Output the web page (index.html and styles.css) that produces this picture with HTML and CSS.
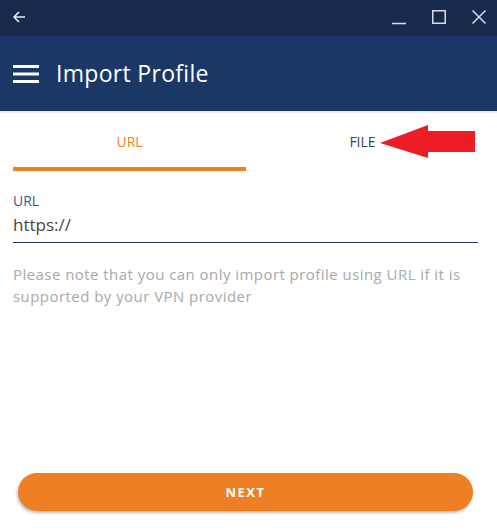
FILE: index.html
```html
<!DOCTYPE html>
<html>
<head>
<meta charset="utf-8">
<link rel="stylesheet" href="styles.css">
</head>
<body>
<div class="app">
  <div class="titlebar">
    <svg class="back" width="16" height="16" viewBox="0 0 16 16"><path d="M14 8H3M8 3L3 8L8 13" fill="none" stroke="#e8ecf2" stroke-width="1.6"/></svg>
    <div class="winctl">
      <svg width="16" height="16" viewBox="0 0 16 16"><path d="M1 14.5H15" stroke="#d8dde6" stroke-width="1.5"/></svg>
      <svg width="16" height="16" viewBox="0 0 16 16"><rect x="1.75" y="1.75" width="12.5" height="12.5" fill="none" stroke="#d8dde6" stroke-width="1.5"/></svg>
      <svg width="16" height="16" viewBox="0 0 16 16"><path d="M1.5 1.5L14.5 14.5M14.5 1.5L1.5 14.5" stroke="#d8dde6" stroke-width="1.5"/></svg>
    </div>
  </div>
  <div class="header">
    <svg class="menu" width="26" height="18" viewBox="0 0 26 18"><path d="M0 1.5H26M0 9H26M0 16.5H26" stroke="#fff" stroke-width="3"/></svg>
    <h1 class="title">Import Profile</h1>
  </div>
  <div class="tabs">
    <div class="tab active">URL</div>
    <div class="tab">FILE</div>
    <svg class="callout" width="96" height="36" viewBox="0 0 96 36"><path d="M0 18L48 0V6H95V27H48V33Z" fill="#ee1c25"/></svg>
  </div>
  <div class="form">
    <label class="label">URL</label>
    <div class="input">https://</div>
    <p class="note">Please note that you can only import profile using URL if it is supported by your VPN provider</p>
  </div>
  <div class="footer">
    <button class="next">NEXT</button>
  </div>
</div>
</body>
</html>
```
FILE: styles.css
```css
html, body {
  margin: 0;
  padding: 0;
  background: #fff;
}
.app {
  width: 497px;
  height: 532px;
  display: flex;
  flex-direction: column;
  font-family: "Open Sans", "Lato", sans-serif;
}
.titlebar {
  height: 36px;
  background: #172a4b;
  display: flex;
  align-items: center;
  justify-content: space-between;
  padding: 0 10px 0 11px;
}
.back { display: block; margin-top: -3px; }
.winctl {
  display: flex;
  gap: 24px;
  align-items: center;
  margin-top: -2px;
}
.winctl svg { display: block; }
.header {
  height: 75px;
  background: #1b3766;
  display: flex;
  align-items: center;
  padding: 0 13px;
  gap: 17px;
  border-bottom: 2px solid #eef0f2;
}
.menu { display: block; }
.title {
  margin: 0;
  color: #fff;
  font-weight: 400;
  font-size: 23px;
  letter-spacing: 0.3px;
  margin-top: -2px;
}
.tabs {
  position: relative;
  display: grid;
  grid-template-columns: 233px 233px;
  margin: 0 18px 0 13px;
}
.tab {
  height: 58px;
  display: flex;
  align-items: center;
  justify-content: center;
  font-size: 14px;
  color: #2b4470;
  padding-top: 2px;
  box-sizing: border-box;
  border-bottom: 4px solid transparent;
}
.tab.active {
  color: #ee8024;
  border-bottom-color: #ee8024;
}
.callout {
  position: absolute;
  left: 367px;
  top: 12px;
}
.form {
  padding: 0 19px 0 13px;
  flex: 1;
}
.label {
  display: block;
  margin-top: 20px;
  font-size: 14px;
  color: #3d5580;
}
.input {
  font-size: 17px;
  color: #444;
  padding: 3px 0 6px;
  border-bottom: 1.5px solid #1b3766;
}
.note {
  margin: 20px 0 0;
  font-size: 15px;
  line-height: 22px;
  letter-spacing: 0.45px;
  color: #a9a9a9;
}
.footer {
  padding: 0 24px 21px 18px;
}
.next {
  width: 100%;
  height: 38px;
  border: 0;
  border-radius: 19px;
  background: #ee7f22;
  color: #fff;
  font-family: "Open Sans", sans-serif;
  font-weight: 700;
  font-size: 13px;
  letter-spacing: 1.5px;
  box-shadow: -1px 2px 3px rgba(0,0,0,0.25);
}
```
